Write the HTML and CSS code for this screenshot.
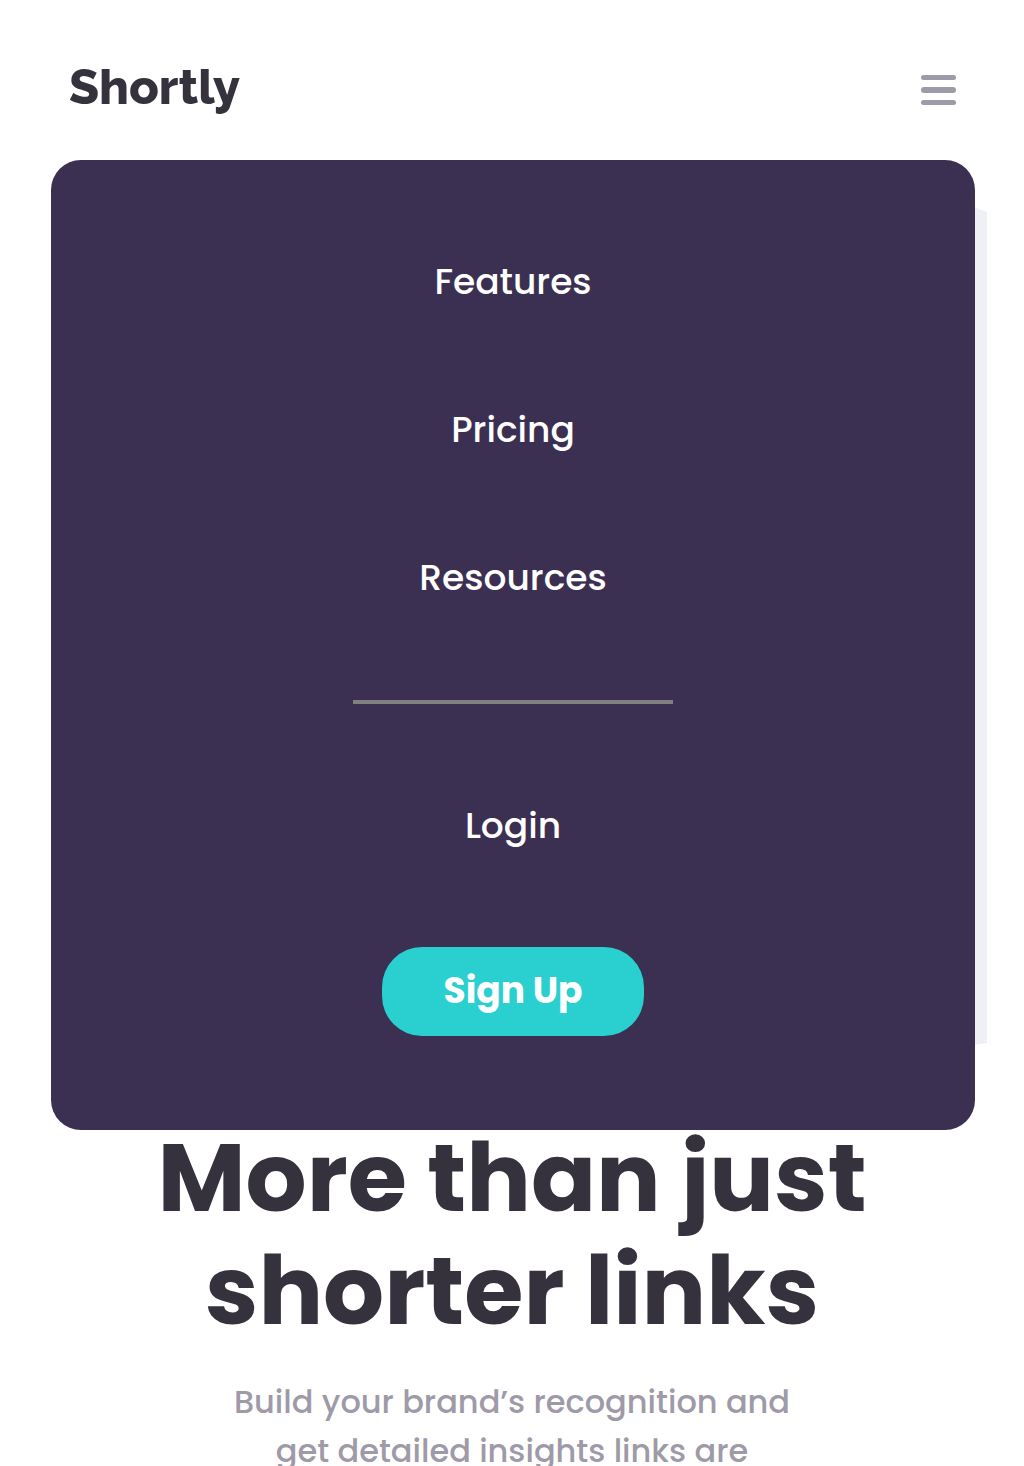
FILE: index.html
```html
<!DOCTYPE html>
<html lang="en">
<head>
  <meta charset="utf-8">
  <meta name="viewport" content="width=device-width, initial-scale=1">
  <title>Shortly</title>
  <link rel="stylesheet" href="styles.css">
</head>
<body>
  <header class="header">
    <a class="logo" href="#">Shortly</a>
    <button class="toggle" type="button" aria-label="Toggle menu" aria-expanded="true">
      <svg width="36" height="30" viewBox="0 0 36 30" aria-hidden="true">
        <g fill="#9e9aa8">
          <rect x="1" y="0" width="35" height="5" rx="2.5"/>
          <rect x="1" y="12" width="35" height="6" rx="3"/>
          <rect x="1" y="25" width="35" height="5" rx="2.5"/>
        </g>
      </svg>
    </button>
    <nav class="menu">
      <a class="menu-link" href="#">Features</a>
      <a class="menu-link" href="#">Pricing</a>
      <a class="menu-link" href="#">Resources</a>
      <hr class="menu-divider">
      <a class="menu-link" href="#">Login</a>
      <button class="signup" type="button">Sign Up</button>
    </nav>
  </header>
  <main class="hero">
    <svg class="illustration" viewBox="0 0 900 838" preserveAspectRatio="none" aria-hidden="true">
      <path fill="#eff0f6" d="M100 0H888L900 5V836L888 838H100Z"/>
    </svg>
    <h1 class="title">More than just shorter links</h1>
    <p class="lead">Build your brand’s recognition and get detailed insights links are</p>
  </main>
</body>
</html>
```
FILE: styles.css
```css
* {
  box-sizing: border-box;
}

body {
  margin: 0;
  overflow-x: hidden;
  background: #fff;
  color: #35323e;
  font-family: Poppins, Inter, sans-serif;
}

.header {
  position: relative;
  display: flex;
  align-items: center;
  justify-content: space-between;
  padding: 57px 68px 43px 69px;
}

.logo {
  color: #35323e;
  font-family: Raleway, Lato, sans-serif;
  font-size: 49px;
  font-weight: 800;
  line-height: 60px;
  text-decoration: none;
}

.toggle {
  display: flex;
  padding: 6px 0 0;
  border: 0;
  background: none;
  cursor: pointer;
}

.menu {
  position: absolute;
  top: 100%;
  left: 51px;
  right: 49px;
  z-index: 1;
  display: flex;
  flex-direction: column;
  align-items: center;
  gap: 94px;
  padding: 95px 24px 94px;
  border-radius: 30px;
  background: #3b2f52;
}

.menu-link {
  color: #fff;
  font-size: 36px;
  font-weight: 500;
  line-height: 54px;
  text-decoration: none;
}

.menu-divider {
  width: 320px;
  height: 4px;
  margin: 1px 0;
  border: 0;
  background: #808080;
}

.signup {
  min-width: 262px;
  padding: 17px 32px 18px;
  border: 0;
  border-radius: 40px;
  background: #2acfcf;
  color: #fff;
  font-family: inherit;
  font-size: 36px;
  font-weight: 700;
  line-height: 54px;
  cursor: pointer;
}

.hero {
  padding: 47px 37px 0;
  text-align: center;
}

.illustration {
  display: block;
  width: 100%;
  height: 838px;
}

.title {
  max-width: 800px;
  margin: 76px auto 0;
  font-size: 96px;
  font-weight: 700;
  line-height: 113px;
}

.lead {
  max-width: 600px;
  margin: 30px auto 0;
  color: #9e9aa8;
  font-size: 32px;
  font-weight: 500;
  line-height: 49px;
}
```
